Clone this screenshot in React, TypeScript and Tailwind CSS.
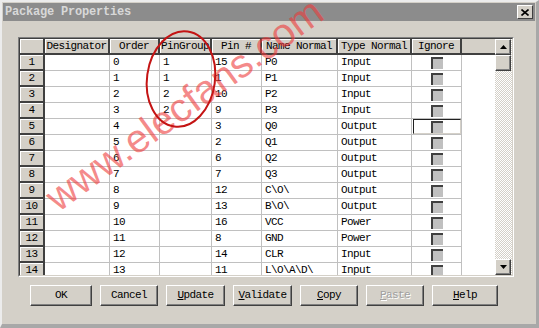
const font = "font-['Liberation_Mono',monospace] text-[11px] tracking-[-0.6px] text-black";

const rows: string[][] = [
  ["0", "1", "15", "P0", "Input"],
  ["1", "1", "1", "P1", "Input"],
  ["2", "2", "10", "P2", "Input"],
  ["3", "2", "9", "P3", "Input"],
  ["4", "", "3", "Q0", "Output"],
  ["5", "", "2", "Q1", "Output"],
  ["6", "", "6", "Q2", "Output"],
  ["7", "", "7", "Q3", "Output"],
  ["8", "", "12", "C\\O\\", "Output"],
  ["9", "", "13", "B\\O\\", "Output"],
  ["10", "", "16", "VCC", "Power"],
  ["11", "", "8", "GND", "Power"],
  ["12", "", "14", "CLR", "Input"],
  ["13", "", "11", "L\\O\\A\\D\\", "Input"],
];

const headers = ["", "Designator", "Order", "PinGroup", "Pin #", "Name Normal", "Type Normal", "Ignore"];

const hdr =
  "bg-[#d4d0c8] border-r-2 border-b-2 border-[#404040] shadow-[inset_1px_1px_0_#fff] flex items-center justify-center overflow-hidden whitespace-nowrap";
const cell = "bg-white border-r border-b border-[#c0c0c0] pl-[3px] flex items-center overflow-hidden whitespace-nowrap";

function Check() {
  return <div className="w-[12px] h-[12px] bg-[#c0c0c0] border-t-2 border-l-2 border-t-[#404040] border-l-[#404040]" />;
}

function Arrow({ up }: { up?: boolean }) {
  return (
    <div className="w-[16px] h-[16px] bg-[#d4d0c8] border border-t-white border-l-white border-r-[#404040] border-b-[#404040] shadow-[inset_-1px_-1px_0_#808080] flex items-center justify-center">
      <svg width="7" height="4" viewBox="0 0 7 4">
        <path d={up ? "M3.5 0 L7 4 L0 4 Z" : "M0 0 L7 0 L3.5 4 Z"} fill="#000" />
      </svg>
    </div>
  );
}

function Button({ label, u, w, disabled }: { label: string; u?: boolean; w: string; disabled?: boolean }) {
  return (
    <div
      className={`${w} h-[21px] bg-[#d4d0c8] border border-t-white border-l-white border-r-[#404040] border-b-[#404040] shadow-[inset_-1px_-1px_0_#808080] flex items-center justify-center ${font} ${
        disabled ? "!text-[#a0a0a0] [text-shadow:1px_1px_0_#fff]" : ""
      }`}
    >
      {u ? (
        <span>
          <span className="underline">{label[0]}</span>
          {label.slice(1)}
        </span>
      ) : (
        label
      )}
    </div>
  );
}

export default function App() {
  return (
    <div className="relative w-[539px] h-[328px] overflow-hidden bg-[#d4d0c8] border-t-2 border-l-2 border-t-[#ececec] border-l-[#ececec] border-r-[3px] border-b-[4px] border-r-[#a8a8a8] border-b-[#a8a8a8] pt-px pl-px pr-px">
      {/* title bar */}
      <div className="h-[18px] bg-[#8c8c8c] flex items-center justify-between pl-[2px] pr-[2px]">
        <span className="font-['Liberation_Mono',monospace] font-bold text-[12px] tracking-[-0.2px] text-[#d8d8d8]">
          Package Properties
        </span>
        <div className="w-[16px] h-[14px] bg-[#d4d0c8] border border-t-white border-l-white border-r-[#404040] border-b-[#404040] flex items-center justify-center">
          <svg width="8" height="7" viewBox="0 0 8 7">
            <path d="M0.5 0.5 L7.5 6.5 M7.5 0.5 L0.5 6.5" stroke="#000" strokeWidth="1.6" />
          </svg>
        </div>
      </div>

      {/* grid */}
      <div className="ml-[15px] mt-[16px] w-[496px] h-[240px] border border-t-[#808080] border-l-[#808080] border-b-white border-r-white">
        <div className="w-full h-full flex border border-t-[#404040] border-l-[#404040] border-b-[#d4d0c8] border-r-[#d4d0c8] bg-white">
          <div className={`flex-1 overflow-hidden grid grid-cols-[25px_65px_50px_52px_50px_76px_74px_50px_33px] auto-rows-[16px] content-start ${font}`}>
            {headers.map((h, i) => (
              <div key={i} className={hdr}>
                {h}
              </div>
            ))}
            <div className="bg-[#d4d0c8] border-b-2 border-[#404040]" />
            {rows.map((r, i) => (
              <div key={i} className="contents">
                <div className={hdr}>{i + 1}</div>
                <div className={cell} />
                {r.map((v, j) => (
                  <div key={j} className={cell}>
                    {v}
                  </div>
                ))}
                <div className={`${cell} justify-center !pl-0`}>
                  {i === 4 ? (
                    <div className="w-[48px] h-[15px] border-t border-l border-t-[#202020] border-l-[#202020] border-r border-b border-r-[#d4d0c8] border-b-[#d4d0c8] flex items-center justify-center">
                      <Check />
                    </div>
                  ) : (
                    <Check />
                  )}
                </div>
                <div className="bg-white" />
              </div>
            ))}
          </div>
          {/* scrollbar */}
          <div className="w-[17px] flex flex-col bg-[repeating-conic-gradient(#d4d0c8_0_25%,#ffffff_0_50%)] bg-[length:2px_2px]">
            <Arrow up />
            <div className="w-[16px] h-[16px] bg-[#d4d0c8] border border-t-white border-l-white border-r-[#404040] border-b-[#404040] shadow-[inset_-1px_-1px_0_#808080]" />
            <div className="flex-1" />
            <Arrow />
          </div>
        </div>
      </div>

      {/* buttons */}
      <div className="flex gap-[8px] ml-[27px] mt-[8px]">
        <Button label="OK" w="w-[62px]" />
        <Button label="Cancel" w="w-[58px]" />
        <Button label="Update" u w="w-[59px]" />
        <Button label="Validate" u w="w-[59px]" />
        <Button label="Copy" u w="w-[58px]" />
        <Button label="Paste" u w="w-[58px]" disabled />
        <Button label="Help" u w="w-[66px]" />
      </div>

      {/* watermark */}
      <div className="absolute left-[182px] top-[102px] -translate-x-1/2 -translate-y-1/2 -rotate-[36deg] whitespace-nowrap font-['Liberation_Sans',sans-serif] text-[40px] leading-none text-[#ee3a3a]/60 pointer-events-none">
        www.elecfans.com
      </div>
      <svg className="absolute left-0 top-0 pointer-events-none" width="539" height="328">
        <ellipse cx="179" cy="77" rx="34" ry="48" transform="rotate(8 179 77)" fill="none" stroke="#c41414" strokeWidth="2" />
      </svg>
    </div>
  );
}
